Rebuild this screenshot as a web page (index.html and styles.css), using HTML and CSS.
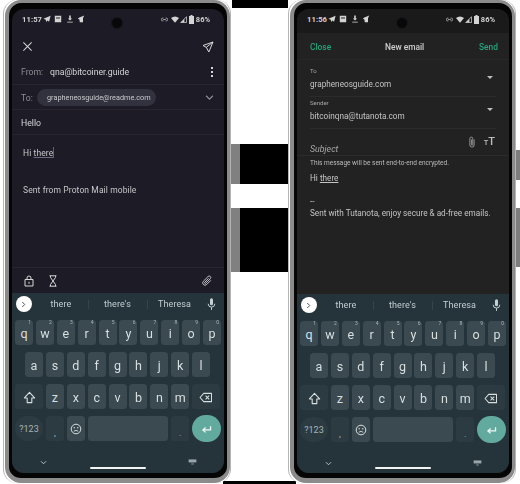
FILE: index.html
```html
<!DOCTYPE html>
<html>
  <head>
    <title>Compose email</title>
    <link rel="stylesheet" href="styles.css">
  </head>
  <body>
    <svg class="sprite" width="0" height="0">
      <symbol id="i-plane" viewBox="0 0 10 10"><path d="M9.500 1 .5 4.600l3 1.300.4 3 1.700-1.900 2 1.300z" fill="currentColor"/></symbol>
      <symbol id="i-photo" viewBox="0 0 10 10"><path d="M1 1h8v8H1z" fill="currentColor"/><path d="M2.500 3h5v1.400h-5z" fill="#222"/></symbol>
      <symbol id="i-down" viewBox="0 0 10 10"><path d="M4 .5h2v4h1.600L5 7 2.400 4.500H4zM1.500 8.300h7v1.200h-7z" fill="currentColor"/></symbol>
      <symbol id="i-bird" viewBox="0 0 10 10"><path d="M9 .5 3 3 1 4.500l2 1 .5 3.500h4L7.500 4z" fill="currentColor"/></symbol>
      <symbol id="i-link" viewBox="0 0 10 6"><path d="M3.500 1H2.500a2 2 0 0 0 0 4h1M6.500 1h1a2 2 0 0 1 0 4h-1M3 3h4" fill="none" stroke="currentColor" stroke-width="1"/></symbol>
      <symbol id="i-wifi" viewBox="0 0 10 8"><path d="M0 2.200Q5-1.800 10 2.200L5 8z" fill="currentColor"/></symbol>
      <symbol id="i-signal" viewBox="0 0 8 8"><path d="M7.500.8v6.700H.800z" fill="none" stroke="currentColor" stroke-width=".9"/><path d="M5 3.500v4H1z" fill="currentColor"/></symbol>
      <symbol id="i-battery" viewBox="0 0 5 9"><path d="M1.500 0h2v1H5v8H0V1h1.500z" fill="currentColor"/></symbol>
      <symbol id="i-clip" viewBox="0 0 12 12"><path d="M9.800 5.400 5.700 9.500a2.300 2.300 0 0 1-3.300-3.300l4.700-4.700a1.500 1.500 0 0 1 2.200 2.200L4.800 8.200a.7.7 0 0 1-1-1L7.600 3.400" fill="none" stroke="currentColor" stroke-width=".9"/></symbol>
      <symbol id="i-mic" viewBox="0 0 10 14"><path d="M3.300 1.800a1.700 1.700 0 0 1 3.400 0v4.400a1.700 1.700 0 0 1-3.400 0z" fill="currentColor"/><path d="M1.300 6.200a3.700 3.700 0 0 0 7.400 0M5 10v3" fill="none" stroke="currentColor" stroke-width="1.100"/></symbol>
      <symbol id="i-shift" viewBox="0 0 14 14"><path d="M7 1.500 1.500 7.500h3V12.500h5V7.500h3z" fill="none" stroke="currentColor" stroke-width="1.200" stroke-linejoin="round"/></symbol>
      <symbol id="i-back" viewBox="0 0 15 12"><path d="M5 1.500h8.500v9H5L1 6z" fill="none" stroke="currentColor" stroke-width="1.100" stroke-linejoin="round"/><path d="m7 4 4 4m0-4-4 4" stroke="currentColor" stroke-width="1.100"/></symbol>
      <symbol id="i-smile" viewBox="0 0 12 12"><circle cx="6" cy="6" r="4.800" fill="none" stroke="currentColor" stroke-width="1"/><circle cx="4.200" cy="4.800" r=".7" fill="currentColor"/><circle cx="7.800" cy="4.800" r=".7" fill="currentColor"/><path d="M3.800 8.200Q6 6.600 8.200 8.200" fill="none" stroke="currentColor" stroke-width=".9"/></symbol>
      <symbol id="i-enter" viewBox="0 0 12 10"><path d="M10.500 1.500v4H2.500M5 2.800 2 5.500l3 2.700" fill="none" stroke="currentColor" stroke-width="1.400"/></symbol>
      <symbol id="i-chev" viewBox="0 0 8 6"><path d="m1 1.500 3 3 3-3" fill="none" stroke="currentColor" stroke-width="1.100"/></symbol>
      <symbol id="i-board" viewBox="0 0 10 7"><path d="M.5.500h9v3.500h-9z" fill="currentColor"/><path d="M3.500 5.800h3" stroke="currentColor" stroke-width="1"/></symbol>
    </svg>

    <div class="shot">
      <div class="phone">
        <div class="bezel">
          <div class="screen screen-proton">
            <span class="camera"></span>
            <div class="status">
              <span class="clock">11:57</span>
              <svg class="st st-a"><use href="#i-plane"/></svg>
              <svg class="st"><use href="#i-photo"/></svg>
              <svg class="st"><use href="#i-down"/></svg>
              <svg class="st"><use href="#i-bird"/></svg>
              <span class="status-right">
                <svg class="st-link"><use href="#i-link"/></svg>
                <svg class="st-wifi"><use href="#i-wifi"/></svg>
                <svg class="st-signal"><use href="#i-signal"/></svg>
                <svg class="st-bat"><use href="#i-battery"/></svg>
                <span class="pct">86%</span>
              </span>
            </div>
            <div class="pm-toolbar">
              <svg class="pm-x" viewBox="0 0 12 12"><path d="m1.500 1.500 9 9m0-9-9 9" stroke="currentColor" stroke-width="1.100"/></svg>
              <svg class="pm-send" viewBox="0 0 12 12"><path d="M11 1 1 4.500l3.300 1.800L6.800 11zM4.300 6.300 11 1" fill="none" stroke="currentColor" stroke-width="1" stroke-linejoin="round"/></svg>
            </div>
            <div class="pm-row pm-from">
              <span class="pm-label">From:</span>
              <span class="pm-value">qna@bitcoiner.guide</span>
              <span class="pm-dots"><i></i><i></i><i></i></span>
            </div>
            <div class="pm-row pm-to">
              <span class="pm-label">To:</span>
              <span class="pm-chip">grapheneosguide@readme.com</span>
              <svg class="pm-chev"><use href="#i-chev"/></svg>
            </div>
            <div class="pm-row pm-subject">Hello</div>
            <div class="pm-body">
              <p class="pm-hi">Hi <u>there</u><span class="caret"></span></p>
              <p class="pm-sig">Sent from Proton Mail mobile</p>
            </div>
            <div class="pm-actions">
              <svg class="pm-lock" viewBox="0 0 10 12"><path d="M1 4.500h8v6.500H1zM3 4.500V3a2 2 0 0 1 4 0v1.500M5 6.800v2" fill="none" stroke="currentColor" stroke-width="1"/></svg>
              <svg class="pm-glass" viewBox="0 0 8 12"><path d="M.5.800h7M.5 11.200h7M1.500.800v1.700L6.500 9.500v1.700M6.500.800v1.700L1.500 9.500v1.700" fill="none" stroke="currentColor" stroke-width="1"/></svg>
              <svg class="pm-clip"><use href="#i-clip"/></svg>
            </div>
            <div class="keyboard">
              <div class="suggest">
                <span class="sg-open"><svg><use href="#i-chev"/></svg></span>
                <span class="sg-word sg-1">there</span>
                <span class="sg-word sg-2">there's</span>
                <span class="sg-word sg-3">Theresa</span>
                <svg class="sg-mic"><use href="#i-mic"/></svg>
              </div>
              <div class="kb-row">
                <span class="key">q<sup>1</sup></span><span class="key">w<sup>2</sup></span><span class="key">e<sup>3</sup></span><span class="key">r<sup>4</sup></span><span class="key">t<sup>5</sup></span><span class="key">y<sup>6</sup></span><span class="key">u<sup>7</sup></span><span class="key">i<sup>8</sup></span><span class="key">o<sup>9</sup></span><span class="key">p<sup>0</sup></span>
              </div>
              <div class="kb-row kb-home">
                <span class="key">a</span><span class="key">s</span><span class="key">d</span><span class="key">f</span><span class="key">g</span><span class="key">h</span><span class="key">j</span><span class="key">k</span><span class="key">l</span>
              </div>
              <div class="kb-row">
                <span class="key key-wide key-dim"><svg class="ic-shift"><use href="#i-shift"/></svg></span>
                <span class="key">z</span><span class="key">x</span><span class="key">c</span><span class="key">v</span><span class="key">b</span><span class="key">n</span><span class="key">m</span>
                <span class="key key-wide key-dim"><svg class="ic-back"><use href="#i-back"/></svg></span>
              </div>
              <div class="kb-row">
                <span class="key key-wide key-dim key-pill key-sym">?123</span>
                <span class="key key-dim key-punct">,</span>
                <span class="key"><svg class="ic-smile"><use href="#i-smile"/></svg></span>
                <span class="key key-space"></span>
                <span class="key key-dim key-punct">.</span>
                <span class="key key-enter"><svg class="ic-enter"><use href="#i-enter"/></svg></span>
              </div>
              <div class="kb-nav">
                <svg class="nav-chev"><use href="#i-chev"/></svg>
                <span class="nav-bar"></span>
                <svg class="nav-board"><use href="#i-board"/></svg>
              </div>
            </div>
          </div>
        </div>
      </div>

      <div class="gutter">
        <span class="g-top"></span>
        <span class="g-btn g-btn-1"></span>
        <span class="g-btn g-btn-2"></span>
        <span class="g-end"></span>
      </div>

      <div class="phone">
        <div class="bezel">
          <div class="screen screen-tuta">
            <span class="camera"></span>
            <div class="status status-tuta">
              <span class="clock">11:56</span>
              <svg class="st st-a"><use href="#i-plane"/></svg>
              <svg class="st"><use href="#i-photo"/></svg>
              <svg class="st"><use href="#i-down"/></svg>
              <svg class="st"><use href="#i-bird"/></svg>
              <span class="status-right">
                <svg class="st-link"><use href="#i-link"/></svg>
                <svg class="st-wifi"><use href="#i-wifi"/></svg>
                <svg class="st-signal"><use href="#i-signal"/></svg>
                <svg class="st-bat"><use href="#i-battery"/></svg>
                <span class="pct">86%</span>
              </span>
            </div>
            <div class="tu-head">
              <span class="tu-action">Close</span>
              <span class="tu-title">New email</span>
              <span class="tu-action">Send</span>
            </div>
            <div class="tu-field tu-to">
              <span class="tu-label">To</span>
              <span class="tu-value">grapheneosguide.com</span>
              <span class="tu-arrow"></span>
            </div>
            <div class="tu-field tu-sender">
              <span class="tu-label">Sender</span>
              <span class="tu-value">bitcoinqna@tutanota.com</span>
              <span class="tu-arrow"></span>
            </div>
            <div class="tu-subject">
              <span class="tu-subject-text">Subject</span>
              <svg class="tu-clip" viewBox="0 0 8 14"><path d="M6.500 4v6.500a2.500 2.500 0 0 1-5 0V3a1.700 1.700 0 0 1 3.400 0v7a.8.8 0 0 1-1.600 0V4" fill="none" stroke="currentColor" stroke-width=".9"/></svg>
              <span class="tu-tt"><small>T</small>T</span>
            </div>
            <p class="tu-note">This message will be sent end-to-end encrypted.</p>
            <div class="tu-body">
              <p>Hi <u>there</u></p>
              <p class="tu-dash">--</p>
              <p>Sent with Tutanota, enjoy secure &amp; ad-free emails.</p>
            </div>
            <div class="keyboard keyboard-tuta">
              <div class="suggest">
                <span class="sg-open"><svg><use href="#i-chev"/></svg></span>
                <span class="sg-word sg-1">there</span>
                <span class="sg-word sg-2">there's</span>
                <span class="sg-word sg-3">Theresa</span>
                <svg class="sg-mic"><use href="#i-mic"/></svg>
              </div>
              <div class="kb-row">
                <span class="key">q<sup>1</sup></span><span class="key">w<sup>2</sup></span><span class="key">e<sup>3</sup></span><span class="key">r<sup>4</sup></span><span class="key">t<sup>5</sup></span><span class="key">y<sup>6</sup></span><span class="key">u<sup>7</sup></span><span class="key">i<sup>8</sup></span><span class="key">o<sup>9</sup></span><span class="key">p<sup>0</sup></span>
              </div>
              <div class="kb-row kb-home">
                <span class="key">a</span><span class="key">s</span><span class="key">d</span><span class="key">f</span><span class="key">g</span><span class="key">h</span><span class="key">j</span><span class="key">k</span><span class="key">l</span>
              </div>
              <div class="kb-row">
                <span class="key key-wide key-dim"><svg class="ic-shift"><use href="#i-shift"/></svg></span>
                <span class="key">z</span><span class="key">x</span><span class="key">c</span><span class="key">v</span><span class="key">b</span><span class="key">n</span><span class="key">m</span>
                <span class="key key-wide key-dim"><svg class="ic-back"><use href="#i-back"/></svg></span>
              </div>
              <div class="kb-row">
                <span class="key key-wide key-dim key-pill key-sym">?123</span>
                <span class="key key-dim key-punct">,</span>
                <span class="key"><svg class="ic-smile"><use href="#i-smile"/></svg></span>
                <span class="key key-space"></span>
                <span class="key key-dim key-punct">.</span>
                <span class="key key-enter"><svg class="ic-enter"><use href="#i-enter"/></svg></span>
              </div>
              <div class="kb-nav">
                <svg class="nav-chev"><use href="#i-chev"/></svg>
                <span class="nav-bar"></span>
                <svg class="nav-board"><use href="#i-board"/></svg>
              </div>
            </div>
          </div>
        </div>
      </div>

      <div class="edge">
        <span class="edge-btn edge-btn-1"></span>
        <span class="edge-btn edge-btn-2"></span>
      </div>
    </div>
  </body>
</html>
```

FILE: styles.css
```css
* {
  box-sizing: border-box;
}
html,
body {
  margin: 0;
  background: #fff;
}
p {
  margin: 0;
}
.sprite {
  display: block;
  height: 0;
}
.shot {
  display: flex;
  width: 520px;
  height: 484px;
  padding-left: 3px;
  overflow: hidden;
  font-family: Roboto, "Liberation Sans", sans-serif;
}

/* phone frame */
.phone {
  position: relative;
  z-index: 1;
  flex: none;
  width: 228px;
  height: 483px;
  border-left: 1px solid #b5b5b5;
  border-right: 1px solid #b5b5b5;
  padding: 0 0 0 1px;
  border-radius: 14px;
}
.bezel {
  height: 483px;
  background: #050505;
  border: solid #8b8b8b;
  border-width: 3px 3px 5px 4px;
  border-radius: 16px;
  padding: 6px 3px 5px 3px;
}
.screen {
  position: relative;
  display: flex;
  flex-direction: column;
  height: 464px;
  border-radius: 12px;
  overflow: hidden;
  filter: blur(0.35px);
}
.screen-proton {
  background: #1c1b26;
  color: #d6d6d8;
}
.screen-tuta {
  background: #222222;
  color: #d2d2d2;
}
.camera {
  position: absolute;
  left: 99px;
  top: 8px;
  width: 12px;
  height: 12px;
  border-radius: 50%;
  background: #08080a;
  border: 1px solid #17171a;
}

/* gutter between phones */
.gutter {
  flex: none;
  position: relative;
  display: flex;
  flex-direction: column;
  width: 57px;
  height: 484px;
}
.g-top {
  height: 8px;
  margin-left: 1px;
  background: #000;
}
.g-btn {
  background: #000;
  border-left: 9px solid #808080;
}
.g-btn-1 {
  height: 40px;
  margin-top: 136px;
}
.g-btn-2 {
  height: 64px;
  margin-top: 24px;
}
.g-end {
  height: 3px;
  margin: 209px -8px 0 -8px;
  background: #000;
}
.edge {
  flex: none;
  display: flex;
  flex-direction: column;
  width: 5px;
}
.edge-btn {
  background: #7e7e7e;
}
.edge-btn-1 {
  height: 30px;
  margin-top: 150px;
}
.edge-btn-2 {
  height: 59px;
  margin-top: 28px;
}

/* status bar */
.status {
  display: flex;
  align-items: center;
  height: 24px;
  padding: 0 14px 4px 10px;
  color: #d4d4d4;
  flex: none;
}
.status-tuta {
  background: #1a1a1a;
}
.clock {
  font-size: 7.600px;
  font-weight: 700;
  width: 21px;
  letter-spacing: 0.1px;
}
.st {
  width: 8px;
  height: 8px;
  margin-right: 3.300px;
}
.status-right {
  display: flex;
  align-items: center;
  margin-left: auto;
}
.st-link {
  width: 7px;
  height: 5px;
  margin-right: 3px;
}
.st-wifi {
  width: 8px;
  height: 7px;
  margin-right: 1px;
}
.st-signal {
  width: 7px;
  height: 7px;
  margin-right: 2px;
}
.st-bat {
  width: 5px;
  height: 9px;
  margin-right: 2px;
}
.pct {
  font-size: 7.500px;
  font-weight: 700;
}

/* proton mail */
.pm-toolbar {
  display: flex;
  justify-content: space-between;
  align-items: center;
  height: 27px;
  padding: 0 10px;
  flex: none;
}
.pm-x {
  width: 11px;
  height: 11px;
}
.pm-send {
  width: 12px;
  height: 12px;
}
.pm-row {
  display: flex;
  align-items: center;
  flex: none;
  height: 25px;
  padding: 0 10px 0 9px;
  border-bottom: 1px solid #262530;
  font-size: 8.700px;
}
.pm-to {
  padding-top: 1px;
}
.pm-label {
  color: #8c8c92;
  width: 29px;
}
.pm-to .pm-label {
  width: 16px;
}
.pm-dots {
  display: flex;
  flex-direction: column;
  gap: 2px;
  margin-left: auto;
  margin-right: 1px;
}
.pm-dots i {
  display: block;
  width: 2px;
  height: 2px;
  background: #d6d6d8;
}
.pm-chip {
  height: 17px;
  line-height: 17px;
  padding: 0 6px 0 10px;
  width: 119px;
  border-radius: 9px;
  background: #32323f;
  font-size: 7.300px;
  white-space: nowrap;
  color: #c8c8cc;
}
.pm-chev {
  width: 9px;
  height: 7px;
  margin-left: auto;
  color: #8c8c92;
}
.pm-subject {
  padding-top: 2px;
}
.pm-body {
  flex: 1;
  padding: 11px 11px 0;
  font-size: 8.500px;
  letter-spacing: 0.1px;
  color: #c6c6ca;
  border-bottom: 1px solid #262530;
}
.pm-hi {
  line-height: 14px;
}
.pm-hi u {
  text-decoration-color: #6c6c80;
}
.caret {
  display: inline-block;
  width: 1px;
  height: 11px;
  background: #5a4fd0;
  vertical-align: -2px;
}
.pm-sig {
  margin-top: 23px;
  line-height: 14px;
}
.pm-actions {
  display: flex;
  align-items: center;
  flex: none;
  height: 25px;
  padding: 0 11px 0 12px;
}
.pm-lock {
  width: 10px;
  height: 12px;
}
.pm-glass {
  width: 8px;
  height: 12px;
  margin-left: 15px;
}
.pm-clip {
  width: 12px;
  height: 12px;
  margin-left: auto;
}

/* tutanota */
.tu-head {
  display: flex;
  justify-content: space-between;
  align-items: center;
  flex: none;
  height: 27px;
  padding: 1px 11px 0 13px;
  font-size: 8.400px;
  font-weight: 500;
  border-bottom: 1px solid #272727;
}
.tu-action {
  color: #22a47c;
}
.tu-title {
  color: #cfcfcf;
  margin-left: -1px;
}
.tu-field {
  position: relative;
  display: flex;
  flex-direction: column;
  flex: none;
  height: 32px;
  padding: 0 13px;
}
.tu-field::after {
  content: "";
  position: absolute;
  left: 13px;
  right: 13px;
  bottom: 0;
  border-bottom: 1px solid #2b2b2b;
}
.tu-to {
  margin-top: 5px;
}
.tu-label {
  font-size: 6px;
  line-height: 8px;
  margin-top: 2px;
  color: #a5a5a5;
}
.tu-value {
  font-size: 8.200px;
  line-height: 12px;
  margin-top: 3px;
  color: #c4c4c4;
}
.tu-arrow {
  position: absolute;
  right: 16px;
  top: 11px;
  border: 3px solid transparent;
  border-top: 3.500px solid #c0c0c0;
  border-bottom: 0;
}
.tu-subject {
  display: flex;
  align-items: center;
  flex: none;
  height: 24px;
  margin-top: 3px;
  padding: 0 14px 0 13px;
  color: #bdbdbd;
  border-bottom: 1px solid #2b2b2b;
}
.tu-subject-text {
  font-size: 8.800px;
  font-style: italic;
  margin-top: 11px;
  color: #a8a8a8;
}
.tu-clip {
  width: 8px;
  height: 12px;
  margin: -3px 8px 0 auto;
  color: #b0b0b0;
}
.tu-tt {
  font-size: 11px;
  line-height: 11px;
  font-weight: 500;
  margin-top: -3px;
}
.tu-tt small {
  font-size: 7.500px;
}
.tu-note {
  flex: none;
  font-size: 6.500px;
  line-height: 10px;
  padding: 2px 13px 0;
  color: #bcbcbc;
}
.tu-body {
  flex: 1;
  padding: 4px 13px 0;
  font-size: 8.200px;
  line-height: 12px;
  white-space: nowrap;
  color: #c4c4c4;
}
.tu-dash {
  margin-top: 11px;
}

/* keyboard */
.keyboard {
  display: flex;
  flex-direction: column;
  flex: none;
  height: 180px;
  background: #25343b;
  color: #d8dfe0;
}
.keyboard-tuta {
  height: 179px;
}
.suggest {
  position: relative;
  display: flex;
  align-items: center;
  flex: none;
  height: 27px;
  font-size: 9px;
  letter-spacing: 0.1px;
  color: #c3cfd2;
}
.sg-open {
  position: absolute;
  left: 3.500px;
  top: 3px;
  display: flex;
  align-items: center;
  justify-content: center;
  width: 16px;
  height: 16px;
  border-radius: 50%;
  background: #fff;
  color: #3a4a50;
}
.sg-open svg {
  width: 7px;
  height: 5px;
  transform: rotate(-90deg);
}
.sg-word {
  position: absolute;
  top: 6px;
  line-height: 11px;
  white-space: nowrap;
}
.sg-1 {
  left: 38.500px;
}
.sg-2 {
  left: 92px;
}
.sg-3 {
  left: 146px;
}
.sg-2::before,
.sg-3::before {
  content: "";
  position: absolute;
  top: 1px;
  height: 9px;
  border-left: 1px solid #34444b;
}
.sg-2::before {
  left: -16px;
}
.sg-3::before {
  left: -11px;
}
.sg-mic {
  position: absolute;
  left: 195px;
  top: 5px;
  width: 9px;
  height: 13px;
}
.kb-row {
  display: flex;
  flex: none;
  gap: 2.900px;
  height: 25px;
  margin-bottom: 7px;
  padding-left: 3px;
}
.kb-home {
  padding-left: 13px;
}
.key {
  position: relative;
  display: flex;
  align-items: center;
  justify-content: center;
  flex: none;
  width: 18px;
  height: 25px;
  border-radius: 3.500px;
  background: #3a4a50;
  font-size: 12.500px;
  padding-top: 1px;
}
.key sup {
  position: absolute;
  right: 2px;
  top: -1px;
  font-size: 5px;
  line-height: 7px;
  color: #a8b4b7;
}
.key-wide {
  width: 28px;
}
.key-dim {
  background: #2c3b41;
}
.key-pill {
  border-radius: 13px;
}
.key-sym {
  font-size: 9px;
  color: #a8b4b7;
}
.key-punct {
  font-size: 9px;
  align-items: flex-end;
  padding-bottom: 3px;
  color: #a8b4b7;
}
.key-space {
  width: 80.500px;
}
.key-enter {
  width: 29px;
  height: 27px;
  margin-top: -1px;
  border-radius: 14px;
  background: #62aa9d;
  color: #f0f6f5;
}
.ic-shift {
  width: 13px;
  height: 13px;
}
.ic-back {
  width: 14px;
  height: 11px;
}
.ic-smile {
  width: 12px;
  height: 12px;
}
.ic-enter {
  width: 11px;
  height: 9px;
}
.kb-nav {
  position: relative;
  flex: 1;
}
.nav-chev {
  position: absolute;
  left: 28px;
  top: 12px;
  width: 7px;
  height: 5px;
  color: #c3cfd2;
}
.nav-bar {
  position: absolute;
  left: 78px;
  bottom: 4px;
  width: 56px;
  height: 2px;
  border-radius: 1px;
  background: #f2f4f4;
}
.nav-board {
  position: absolute;
  left: 176px;
  top: 11px;
  width: 9px;
  height: 6px;
  color: #9aa6a9;
}
```
